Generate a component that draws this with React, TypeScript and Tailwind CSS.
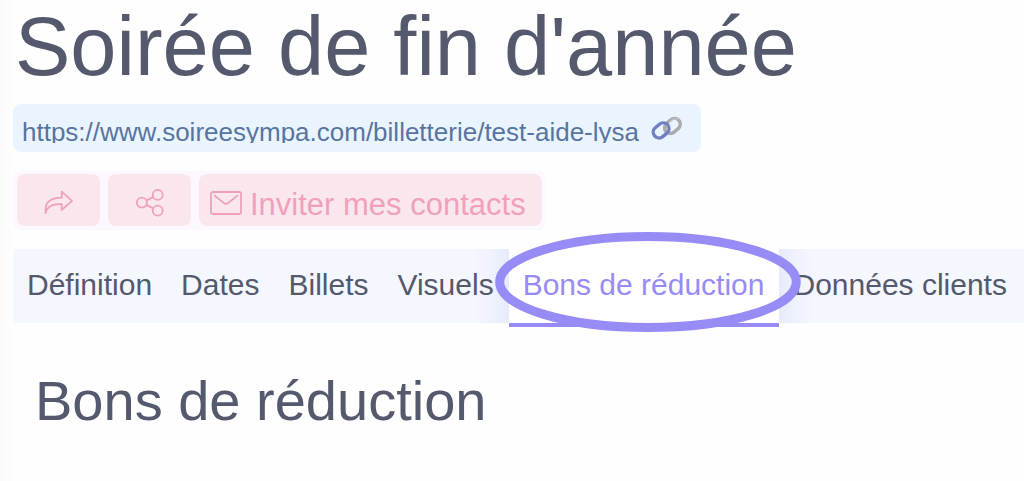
import clsx from "clsx";

const tabs = ["Définition", "Dates", "Billets", "Visuels", "Bons de réduction", "Données clients"];
const activeTab = "Bons de réduction";

const actionClass = "h-[52px] pt-1.5 rounded-lg bg-[#fae7ed] text-[#f0a0bb] flex items-center justify-center";

export default function App() {
  return (
    <main className="min-h-screen overflow-hidden pl-[13px] text-[#54596d] font-['Liberation_Sans',Arial,sans-serif] bg-[linear-gradient(to_right,#fafafa,#fefefe_13px)]">
      <h1 className="pl-0.5 text-[83px] leading-[94px] whitespace-nowrap">Soirée de fin d'année</h1>

      <div className="mt-2.5 h-12 w-fit rounded-lg bg-[#e9f4fe] pl-[9px] pr-[18px] flex items-start">
        <a href="#" className="mt-[17px] overflow-hidden text-[26px] leading-[22px] whitespace-nowrap text-[#58749f]">
          https://www.soireesympa.com/billetterie/test-aide-lysa
        </a>
        <button aria-label="Copier le lien" className="mt-3 ml-3">
          <LinkIcon />
        </button>
      </div>

      <div className="mt-[19px] w-fit rounded-lg bg-[#fdf8ff] px-1 pt-[3px] pb-1 flex gap-2">
        <button aria-label="Transférer" className={clsx(actionClass, "w-[83px]")}>
          <ForwardIcon />
        </button>
        <button aria-label="Partager" className={clsx(actionClass, "w-[83px]")}>
          <ShareIcon />
        </button>
        <button className={clsx(actionClass, "gap-2 pl-[11px] pr-4")}>
          <MailIcon />
          <span className="pt-1 text-[31px] leading-9 whitespace-nowrap">Inviter mes contacts</span>
        </button>
      </div>

      <nav className="isolate mt-[19px] h-[74px] flex gap-px bg-[#f4f7fe]">
        {tabs.map((tab) => (
          <Tab key={tab} name={tab} active={tab === activeTab} />
        ))}
      </nav>

      <h2 className="mt-[46px] pl-[22px] text-[56px] leading-[64px] whitespace-nowrap">Bons de réduction</h2>
    </main>
  );
}

function Tab({ name, active }: { name: string; active: boolean }) {
  return (
    <a
      href="#"
      aria-current={active ? "page" : undefined}
      className={clsx(
        "px-3.5 pt-[18px] text-[30px] leading-9 whitespace-nowrap shrink-0",
        active &&
          "relative h-[78px] bg-white border-b-4 border-[#978bf5] text-[#978bf5] before:absolute before:-z-10 before:right-full before:top-0 before:h-[74px] before:w-9 before:bg-linear-to-l before:from-[#e6eafb] before:via-[#f0f3fd] before:to-[#f4f7fe] after:absolute after:-z-10 after:left-full after:top-0 after:h-[74px] after:w-9 after:bg-linear-to-r after:from-[#e6eafb] after:via-[#f0f3fd] after:to-[#f4f7fe]"
      )}
    >
      {name}
      {active && <Highlight />}
    </a>
  );
}

// hand drawn style ring around the current tab
function Highlight() {
  return (
    <svg className="absolute z-10 -left-3.5 -top-[17px] h-[100px] w-[306px] pointer-events-none" viewBox="0 0 306 100" fill="none">
      <ellipse cx="153" cy="50" rx="148.3" ry="45.5" stroke="#978bf5" strokeWidth="9" />
    </svg>
  );
}

function LinkIcon() {
  return (
    <svg width="32" height="26" viewBox="0 0 32 26" fill="none">
      <g strokeWidth="3.4">
        <rect x="12.9" y="4.1" width="17" height="11.6" rx="5.8" transform="rotate(-40 21.4 9.9)" stroke="#ababae" />
        <rect x="1.6" y="8.6" width="17" height="11.6" rx="5.8" transform="rotate(-40 10.1 14.4)" stroke="#6f7fc0" />
      </g>
      <path d="M14.4 15.6c-1-2.2-.5-4.3 1.3-6.1" stroke="#ababae" strokeWidth="2.6" />
      <path d="M18 6.3l2.4-1.9c3-2.2 6-2 7.3-.4" stroke="#cfcfd2" />
    </svg>
  );
}

function ForwardIcon() {
  return (
    <svg width="30" height="26" viewBox="0 0 30 26" fill="none" stroke="currentColor" strokeWidth="1.8" strokeLinejoin="round">
      <path d="M1.6 23.2V19C1.6 11.5 8 7.7 17.7 7.7V1.6L28 10.8 17.7 20v-5.8C9.5 13.8 3 16 1.6 23.2z" />
    </svg>
  );
}

function ShareIcon() {
  return (
    <svg width="28" height="28" viewBox="0 0 28 28" fill="none" stroke="currentColor" strokeWidth="1.8">
      <circle cx="5.9" cy="13.6" r="5" />
      <circle cx="21.7" cy="5.9" r="5" />
      <circle cx="21.7" cy="21.7" r="5" />
      <path d="M10.4 11.4l6.8-3.3M10.4 15.9l6.8 3.5" />
    </svg>
  );
}

function MailIcon() {
  return (
    <svg width="32" height="24" viewBox="0 0 32 24" fill="none" stroke="currentColor" strokeWidth="1.8" strokeLinecap="round" strokeLinejoin="round">
      <rect x="1" y="1" width="30" height="22" rx="1.8" />
      <path d="M4.6 4.6l9.6 7.6c1.2.9 2.4.9 3.6 0l9.6-7.6" />
    </svg>
  );
}
